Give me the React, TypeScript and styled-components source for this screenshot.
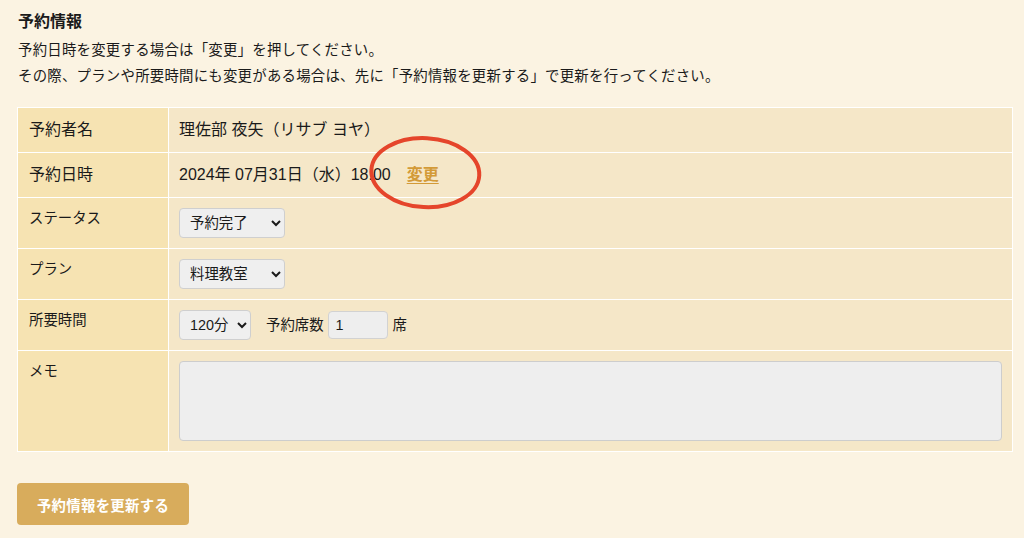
import styled, { createGlobalStyle } from 'styled-components'

const GlobalStyle = createGlobalStyle`
  html, body {
    margin: 0;
    background: #fbf3e2;
  }
  body {
    font-family: "Liberation Sans", "Noto Sans CJK JP", sans-serif;
    color: #1a1a1a;
  }
`

function App() {
  return (
    <Page>
      <GlobalStyle />
      <Title>予約情報</Title>
      <Note>
        予約日時を変更する場合は「変更」を押してください。
        <br />
        その際、プランや所要時間にも変更がある場合は、先に「予約情報を更新する」で更新を行ってください。
      </Note>
      <InfoTable>
        <tbody>
          <tr>
            <Label $main>予約者名</Label>
            <Value $main>理佐部 夜矢（リサブ ヨヤ）</Value>
          </tr>
          <tr>
            <Label $main>予約日時</Label>
            <Value $main>
              2024年 07月31日（水）18:00
              <ChangeWrap>
                <ChangeLink href="#">変更</ChangeLink>
                <Circle viewBox="0 0 116 78" aria-hidden="true">
                  <ellipse
                    cx="58"
                    cy="39"
                    rx="54"
                    ry="34.5"
                    fill="none"
                    stroke="#e5452b"
                    strokeWidth="4"
                    transform="rotate(3 58 39)"
                  />
                </Circle>
              </ChangeWrap>
            </Value>
          </tr>
          <tr>
            <Label>ステータス</Label>
            <Value>
              <Select $w={106} defaultValue="done">
                <option value="done">予約完了</option>
              </Select>
            </Value>
          </tr>
          <tr>
            <Label>プラン</Label>
            <Value>
              <Select $w={106} defaultValue="cook">
                <option value="cook">料理教室</option>
              </Select>
            </Value>
          </tr>
          <tr>
            <Label>所要時間</Label>
            <Value>
              <InlineRow>
                <Select $w={72} defaultValue="120">
                  <option value="120">120分</option>
                </Select>
                <SeatLabel>予約席数</SeatLabel>
                <SeatInput defaultValue="1" />
                <span>席</span>
              </InlineRow>
            </Value>
          </tr>
          <tr>
            <Label>メモ</Label>
            <Value>
              <Memo />
            </Value>
          </tr>
        </tbody>
      </InfoTable>
      <SubmitButton>予約情報を更新する</SubmitButton>
    </Page>
  )
}

export default App

const Page = styled.div`
  padding: 10px 11px 14px 17px;
`

const Title = styled.h2`
  margin: 0;
  font-size: 16px;
  line-height: 24px;
  font-weight: bold;
  padding-left: 1px;
`

const Note = styled.p`
  margin: 3px 0 0;
  font-size: 14.4px;
  line-height: 26px;
  letter-spacing: 0.25px;
  padding-left: 1px;
`

const InfoTable = styled.table`
  margin-top: 18px;
  width: 100%;
  border-collapse: collapse;
  border: 1px solid #fff;
`

const Label = styled.th<{ $main?: boolean }>`
  width: 151px;
  box-sizing: border-box;
  background: #f6e3b2;
  border: 1px solid #fff;
  padding: 10px 11px;
  text-align: left;
  font-weight: normal;
  font-size: ${(p) => (p.$main ? '16px' : '14.4px')};
  line-height: ${(p) => (p.$main ? '24px' : '20px')};
  vertical-align: ${(p) => (p.$main ? 'middle' : 'top')};
`

const Value = styled.td<{ $main?: boolean }>`
  background: #f5e7c8;
  border: 1px solid #fff;
  padding: 10px;
  font-size: ${(p) => (p.$main ? '16px' : '14.4px')};
  line-height: ${(p) => (p.$main ? '24px' : '20px')};
  vertical-align: middle;
`

const ChangeWrap = styled.span`
  position: relative;
  display: inline-block;
  margin-left: 16px;
`

const ChangeLink = styled.a`
  color: #d39a37;
  font-weight: 600;
  text-decoration: underline;
  text-underline-offset: 3px;
`

const Circle = styled.svg`
  position: absolute;
  left: 50%;
  top: 50%;
  width: 116px;
  height: 78px;
  transform: translate(-48%, -53%);
  pointer-events: none;
`

const Select = styled.select<{ $w: number }>`
  display: block;
  width: ${(p) => p.$w}px;
  height: 30px;
  box-sizing: border-box;
  padding: 0 4px 0 6px;
  font-family: inherit;
  font-size: 14.4px;
  color: #1a1a1a;
  background: #efefef;
  border: 1px solid #cfcfcf;
  border-radius: 4px;
`

const InlineRow = styled.div`
  display: flex;
  align-items: center;
`

const SeatLabel = styled.span`
  margin-left: 15px;
  margin-right: 4px;
`

const SeatInput = styled.input`
  width: 60px;
  height: 28px;
  box-sizing: border-box;
  padding: 0 7px;
  margin-right: 5px;
  font-family: inherit;
  font-size: 14.4px;
  color: #1a1a1a;
  background: #eeeeee;
  border: 1px solid #d2d2d2;
  border-radius: 4px;
`

const Memo = styled.textarea`
  display: block;
  width: 100%;
  height: 80px;
  box-sizing: border-box;
  resize: none;
  background: #eeeeee;
  border: 1px solid #cdcdcd;
  border-radius: 4px;
`

const SubmitButton = styled.button`
  display: block;
  margin-top: 31px;
  width: 172px;
  height: 42px;
  border: none;
  border-radius: 4px;
  background: #d8ac5c;
  color: #fff;
  font-family: "Noto Sans CJK JP", sans-serif;
  font-size: 14.4px;
  font-weight: 600;
  letter-spacing: 0.3px;
`
